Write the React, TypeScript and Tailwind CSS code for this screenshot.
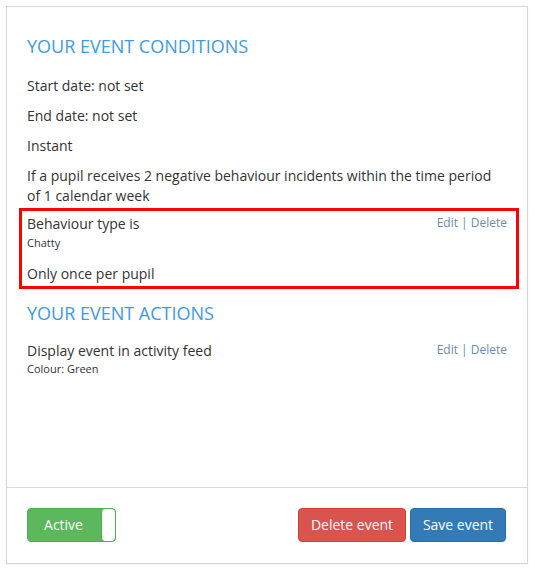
import React from "react";

export default function App() {
  return (
    <div className="w-[535px] h-[570px] bg-white pt-[6px] px-[6px]" style={{ fontFamily: '"Open Sans", "Noto Sans", sans-serif' }}>
      <div className="w-[522px] h-[558px] border border-[#cfd8de] flex flex-col shadow-[0_1px_2px_rgba(0,0,0,0.05)]">
        <div className="flex-1 px-[20px] pt-[28px] text-[14px] text-[#333] leading-[20px]">
          <h2 className="text-[18px] leading-[22px] text-[#3d9ae8] mb-[19px]">YOUR EVENT CONDITIONS</h2>
          <p className="mb-[10px]">Start date: not set</p>
          <p className="mb-[10px]">End date: not set</p>
          <p className="mb-[10px]">Instant</p>
          <p className="mb-[2px]">If a pupil receives 2 negative behaviour incidents within the time period of 1 calendar week</p>
          <div className="ml-[-8px] mr-[-12px] border-[3px] border-[#ff0000] pl-[5px] pr-[9px] pt-[3px] pb-[2px]">
            <div className="flex justify-between">
              <span>Behaviour type is</span>
              <span className="text-[12px] text-[#6a8bab] leading-[20px] -mt-[1px]">Edit | Delete</span>
            </div>
            <div className="text-[11px] leading-[16px] mt-[1px] mb-[13px]">Chatty</div>
            <div>Only once per pupil</div>
          </div>
          <h2 className="text-[18px] leading-[22px] text-[#3d9ae8] mt-[13px] mb-[17px]">YOUR EVENT ACTIONS</h2>
          <div className="flex justify-between">
            <span>Display event in activity feed</span>
            <span className="text-[12px] text-[#6a8bab] leading-[20px] -mt-[1px]">Edit | Delete</span>
          </div>
          <div className="text-[11px] leading-[16px]">Colour: Green</div>
        </div>
        <div className="h-[76px] border-t border-[#d5dde3] flex items-center justify-between pl-[20px] pr-[21px] pb-[2px]">
          <div className="w-[89px] h-[34px] rounded-[4px] bg-[#5cb85c] border border-[#4cae4c] flex items-center overflow-hidden">
            <span className="flex-1 text-center text-white text-[14px] pr-[2px]">Active</span>
            <span className="w-[14px] h-full bg-white rounded-[4px] border-l border-[#4cae4c]"></span>
          </div>
          <div className="flex gap-[4px]">
            <button className="w-[108px] h-[34px] rounded-[4px] bg-[#d9534f] border border-[#d43f3a] text-white text-[14px]">Delete event</button>
            <button className="w-[96px] h-[34px] rounded-[4px] bg-[#337ab7] border border-[#2e6da4] text-white text-[14px]">Save event</button>
          </div>
        </div>
      </div>
    </div>
  );
}
